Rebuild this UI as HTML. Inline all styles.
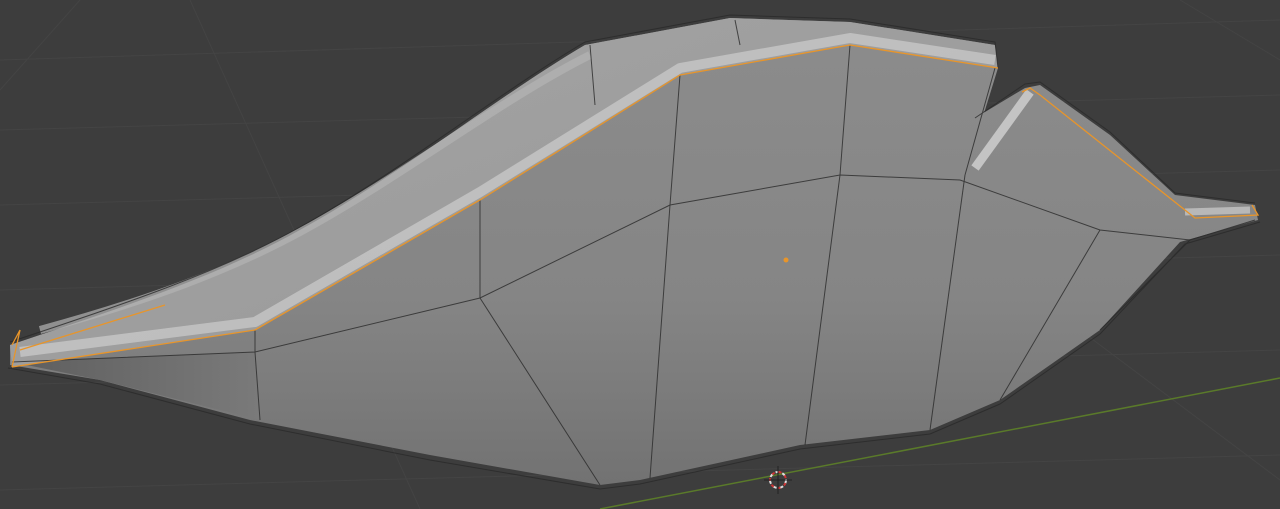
<!DOCTYPE html>
<html><head><meta charset="utf-8"><style>
html,body{margin:0;padding:0;background:#3d3d3d;width:1280px;height:509px;overflow:hidden}
svg{display:block}
</style></head><body>
<svg width="1280" height="509" viewBox="0 0 1280 509" xmlns="http://www.w3.org/2000/svg">
<defs>
<linearGradient id="body" x1="0" y1="0" x2="0" y2="1">
<stop offset="0" stop-color="#8c8c8c"/><stop offset="0.6" stop-color="#858585"/><stop offset="1" stop-color="#727272"/>
</linearGradient>
<linearGradient id="lip" x1="0" y1="0" x2="1" y2="1">
<stop offset="0" stop-color="#a4a4a4"/><stop offset="0.5" stop-color="#9e9e9e"/><stop offset="1" stop-color="#969696"/>
</linearGradient>
<linearGradient id="left" x1="0" y1="0" x2="1" y2="0">
<stop offset="0" stop-color="#5e5e5e"/><stop offset="1" stop-color="#7a7a7a"/>
</linearGradient>
</defs>
<rect width="1280" height="509" fill="#3d3d3d"/>
<g stroke="#444" stroke-width="1">
<line x1="0" y1="60" x2="1280" y2="20"/><line x1="0" y1="130" x2="1280" y2="95"/>
<line x1="0" y1="205" x2="1280" y2="170"/><line x1="0" y1="290" x2="1280" y2="255"/>
<line x1="0" y1="385" x2="1280" y2="350"/><line x1="0" y1="490" x2="1280" y2="455"/>
<line x1="190" y1="0" x2="420" y2="509"/><line x1="80" y1="0" x2="0" y2="90"/>
<line x1="1180" y1="0" x2="1280" y2="60"/><line x1="1080" y1="330" x2="1280" y2="480"/>
</g>
<line x1="600" y1="509" x2="1280" y2="378" stroke="#5a7a2a" stroke-width="1.5"/>
<!-- main body -->
<path fill="url(#body)" d="M10,345 C130,305 220,275 300,230 C400,175 500,95 585,45 L730,18 850,22 995,45 998,68 965,175 975,118 1025,88 1040,85 1110,135 1175,195 1255,205 1258,220 1180,242 1100,330 1000,400 930,430 800,445 640,480 600,485 430,455 250,420 100,380 10,365Z"/>
<polygon fill="url(#left)" points="12,362 255,352 260,420 100,380"/>
<!-- lip -->
<path fill="url(#lip)" d="M10,345 C130,305 220,275 300,230 C400,175 500,95 585,45 L730,18 850,22 995,45 998,68 850,45 680,75 480,200 255,330 12,367Z"/>
<!-- bright rolled edge -->
<path d="M20,352 L255,322 L480,192 L680,68 L850,38 L995,60" fill="none" stroke="#c2c2c2" stroke-width="10" stroke-linejoin="round" opacity="0.9"/>
<path d="M40,330 C150,300 230,270 300,232 C400,178 500,100 590,55" fill="none" stroke="#b4b4b4" stroke-width="8" opacity="0.7"/>
<path d="M975,168 L1030,92" stroke="#c4c4c4" stroke-width="9" fill="none"/>
<path d="M1185,212 L1250,210" stroke="#b8b8b8" stroke-width="7" fill="none"/>
<!-- wireframe -->
<g stroke="#2a2a2a" stroke-width="1" fill="none" opacity="0.8">
<path d="M10,342 C130,302 220,272 300,227 C400,172 500,92 585,42 L730,15 850,19 995,42 998,68"/>
<polyline points="975,118 1025,84 1040,82 1110,132 1175,193 1255,203"/>
<polyline points="12,362 255,352 480,298 670,205 840,175 960,180 1100,230 1190,240 1255,220"/>
<polyline points="255,330 255,352 260,420"/>
<polyline points="480,200 480,298 600,485"/>
<polyline points="680,75 670,205 650,478"/>
<polyline points="850,45 840,175 805,445"/>
<polyline points="965,175 930,430"/>
<polyline points="1100,230 1000,400"/>
<polyline points="1190,240 1100,330"/>
<polyline points="8,368 100,384 250,424 430,460 600,489 640,484 800,449 930,434 1000,404 1100,334 1185,244 1260,222"/>
<polyline points="590,45 595,105"/><polyline points="735,20 740,45"/>
<polyline points="995,68 965,175"/>
</g>
<g stroke="#e8952a" stroke-width="1.3" fill="none">
<polyline points="12,367 255,330 480,200 680,75 850,45 998,68"/>
<polyline points="12,345 20,330 12,367"/>
<polyline points="20,350 165,305"/>
<polyline points="1022,92 1030,88 1040,95 1195,218 1258,215 1252,205"/>
</g>
<circle cx="786" cy="260" r="2.5" fill="#e8952a"/>
<circle cx="778" cy="480" r="8" fill="none" stroke="#ddd" stroke-width="2" stroke-dasharray="4 3"/>
<circle cx="778" cy="480" r="8" fill="none" stroke="#c33" stroke-width="2" stroke-dasharray="3 4" stroke-dashoffset="4"/>
<line x1="778" y1="466" x2="778" y2="494" stroke="#222"/><line x1="764" y1="480" x2="792" y2="480" stroke="#222"/>
</svg>
</body></html>
